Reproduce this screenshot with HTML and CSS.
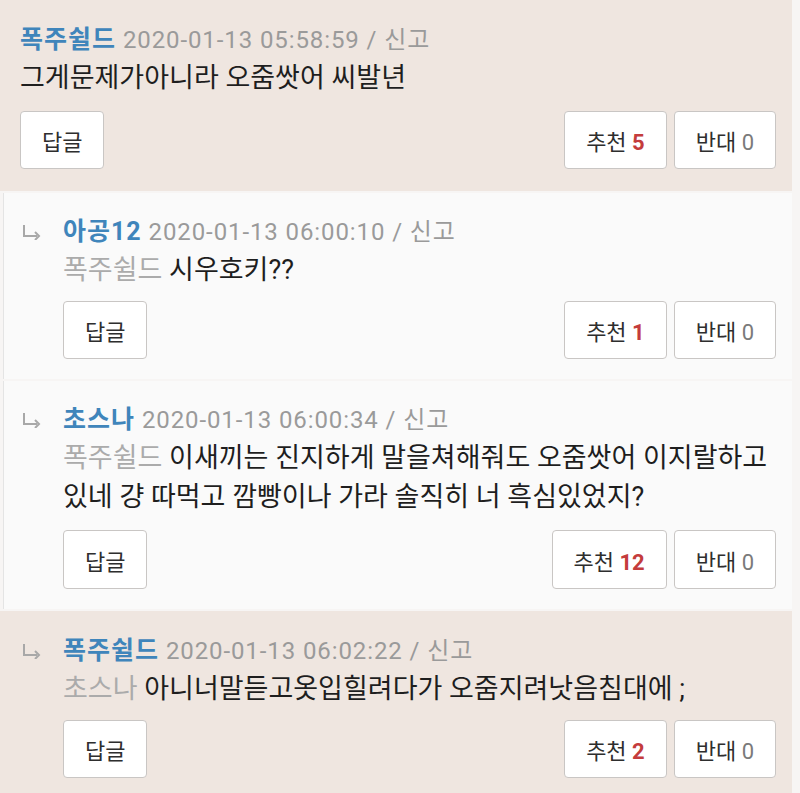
FILE: index.html
```html
<!DOCTYPE html>
<html lang="ko">
<head>
<meta charset="utf-8">
<link rel="stylesheet" href="styles.css">
</head>
<body>
<div class="list">
  <div class="comment beige top">
    <div class="body">
      <div class="meta"><span class="name">폭주쉴드</span> <span class="date">2020-01-13 05:58:59 / 신고</span></div>
      <div class="text">그게문제가아니라 오줌쌋어 씨발년</div>
      <div class="actions">
        <button class="btn">답글</button>
        <div class="votes">
          <button class="btn">추천 <b class="up">5</b></button>
          <button class="btn">반대 <span class="down">0</span></button>
        </div>
      </div>
    </div>
  </div>

  <div class="comment white reply">
    <svg class="arrow" width="20" height="16" viewBox="0 0 20 16"><path d="M2 1V12H15" fill="none" stroke="#a8a8a8" stroke-width="2"/><path d="M13 8L17 12L13 16" fill="none" stroke="#a8a8a8" stroke-width="2"/></svg>
    <div class="body">
      <div class="meta"><span class="name">아공12</span> <span class="date">2020-01-13 06:00:10 / 신고</span></div>
      <div class="text"><span class="to">폭주쉴드</span> 시우호키??</div>
      <div class="actions">
        <button class="btn">답글</button>
        <div class="votes">
          <button class="btn">추천 <b class="up">1</b></button>
          <button class="btn">반대 <span class="down">0</span></button>
        </div>
      </div>
    </div>
  </div>

  <div class="comment white reply two">
    <svg class="arrow" width="20" height="16" viewBox="0 0 20 16"><path d="M2 1V12H15" fill="none" stroke="#a8a8a8" stroke-width="2"/><path d="M13 8L17 12L13 16" fill="none" stroke="#a8a8a8" stroke-width="2"/></svg>
    <div class="body">
      <div class="meta"><span class="name">초스나</span> <span class="date">2020-01-13 06:00:34 / 신고</span></div>
      <div class="text"><span class="to">폭주쉴드</span> 이새끼는 진지하게 말을쳐해줘도 오줌쌋어 이지랄하고<br>있네 걍 따먹고 깜빵이나 가라 솔직히 너 흑심있었지?</div>
      <div class="actions">
        <button class="btn">답글</button>
        <div class="votes">
          <button class="btn">추천 <b class="up">12</b></button>
          <button class="btn">반대 <span class="down">0</span></button>
        </div>
      </div>
    </div>
  </div>

  <div class="comment beige reply">
    <svg class="arrow" width="20" height="16" viewBox="0 0 20 16"><path d="M2 1V12H15" fill="none" stroke="#a8a8a8" stroke-width="2"/><path d="M13 8L17 12L13 16" fill="none" stroke="#a8a8a8" stroke-width="2"/></svg>
    <div class="body">
      <div class="meta"><span class="name">폭주쉴드</span> <span class="date">2020-01-13 06:02:22 / 신고</span></div>
      <div class="text"><span class="to">초스나</span> 아니너말듣고옷입힐려다가 오줌지려낫음침대에 ;</div>
      <div class="actions">
        <button class="btn">답글</button>
        <div class="votes">
          <button class="btn">추천 <b class="up">2</b></button>
          <button class="btn">반대 <span class="down">0</span></button>
        </div>
      </div>
    </div>
  </div>
</div>
</body>
</html>
```

FILE: styles.css
```css
* { box-sizing: border-box; }
html, body {
  margin: 0;
  padding: 0;
  background: #f7f5f4;
  width: 800px;
  height: 793px;
  overflow: hidden;
  font-family: "Roboto", "Noto Sans CJK KR", sans-serif;
}
.list {
  display: flex;
  flex-direction: column;
  gap: 2px;
  width: 792px;
}
.comment {
  display: flex;
  padding: 20px 16px 20px 20px;
}
.comment.top {
  padding-top: 21px;
  padding-bottom: 22px;
}
.comment.top .actions {
  margin-top: 13px;
}
.comment.two .actions {
  margin-top: 13px;
}
.comment.two .btn {
  height: 59px;
}
.comment.beige {
  background: #efe6e0;
}
.comment.white {
  background: #fafafa;
  border-left: 1px solid #e4e4e4;
  margin-left: 3px;
  padding-left: 18px;
}
.comment.reply.beige {
  padding-left: 22px;
  padding-top: 21px;
}
.arrow {
  flex: none;
  margin-top: 11px;
  margin-right: 21px;
}
.body {
  flex: 1;
  min-width: 0;
}
.meta {
  font-size: 24px;
  line-height: 38px;
  white-space: nowrap;
  letter-spacing: 0.9px;
}
.name {
  color: #3f85bb;
  font-weight: 700;
  font-size: 25px;
  letter-spacing: 1px;
}
.date {
  color: #9a9a9a;
}
.text {
  font-size: 27px;
  line-height: 39px;
  color: #1e1e1e;
  white-space: nowrap;
}
.to {
  color: #ababab;
}
.actions {
  display: flex;
  justify-content: space-between;
  margin-top: 11px;
}
.votes {
  display: flex;
  gap: 7px;
}
.btn {
  height: 58px;
  padding: 0 21px;
  background: #fff;
  border: 1.5px solid #c9c6c4;
  border-radius: 4px;
  font-family: "Roboto", "Noto Sans CJK KR", sans-serif;
  font-size: 22px;
  color: #2e2e2e;
}
.up {
  color: #c43c3c;
  font-weight: 700;
}
.down {
  color: #7a7a7a;
}
```
